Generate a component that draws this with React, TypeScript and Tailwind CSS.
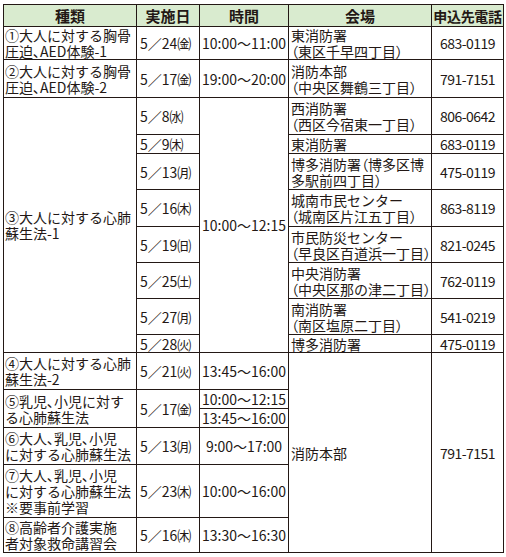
import React from "react";

const td = "border border-[#231815] align-middle p-0";
const c1 = td + " pl-[1px] text-left whitespace-nowrap";
const c2 = td + " pl-[3px] text-left whitespace-nowrap";
const c3 = td + " text-center whitespace-nowrap";
const c4 = td + " pl-[2px] text-left whitespace-nowrap";
const c5 = td + " text-center whitespace-nowrap";

const Num = ({ children }: { children: React.ReactNode }) => (
  <span className="tracking-[-0.04em]">{children}</span>
);
const P = ({ children }: { children: React.ReactNode }) => (
  <span className="[font-feature-settings:'palt']">{children}</span>
);
const L = () => <P>（</P>;
const R = () => <P>）</P>;
const C = () => <P>、</P>;

export default function App() {
  return (
    <div className="w-[506px] h-[557px] bg-white pt-[4px] pl-[3px] font-['Noto_Sans_CJK_JP','Noto_Sans',sans-serif] text-[14px] leading-[16px] text-[#231815]">
      <table className="border-collapse table-fixed w-[500px]">
        <colgroup>
          <col className="w-[133px]" />
          <col className="w-[63px]" />
          <col className="w-[89px]" />
          <col className="w-[143px]" />
          <col className="w-[72px]" />
        </colgroup>
        <tbody>
          <tr className="h-[22px] bg-[#d9ebcf] font-bold text-[15px] leading-[20px]">
            <td className={td + " text-center"}>種類</td>
            <td className={td + " text-center"}>実施日</td>
            <td className={td + " text-center"}>時間</td>
            <td className={td + " text-center"}>会場</td>
            <td className={td + " text-center whitespace-nowrap text-[14px] tracking-[-0.02em]"}>申込先電話</td>
          </tr>
          <tr className="h-[33px]">
            <td className={c1}>①大人に対する胸骨<br />圧迫<C />AED体験-1</td>
            <td className={c2}>5／24㈮</td>
            <td className={c3}>10:00～11:00</td>
            <td className={c4}>東消防署<br /><L />東区千早四丁目<R /></td>
            <td className={c5}><Num>683-0119</Num></td>
          </tr>
          <tr className="h-[38px]">
            <td className={c1}>②大人に対する胸骨<br />圧迫<C />AED体験-2</td>
            <td className={c2}>5／17㈮</td>
            <td className={c3}>19:00～20:00</td>
            <td className={c4}>消防本部<br /><L />中央区舞鶴三丁目<R /></td>
            <td className={c5}><Num>791-7151</Num></td>
          </tr>
          <tr className="h-[37px]">
            <td className={c1} rowSpan={8}>③大人に対する心肺<br />蘇生法-1</td>
            <td className={c2}>5／8㈬</td>
            <td className={c3} rowSpan={8}>10:00～12:15</td>
            <td className={c4}>西消防署<br /><L />西区今宿東一丁目<R /></td>
            <td className={c5}><Num>806-0642</Num></td>
          </tr>
          <tr className="h-[19px]">
            <td className={c2}>5／9㈭</td>
            <td className={c4}>東消防署</td>
            <td className={c5}><Num>683-0119</Num></td>
          </tr>
          <tr className="h-[36px]">
            <td className={c2}>5／13㈪</td>
            <td className={c4}>博多消防署<L />博多区博<br />多駅前四丁目<R /></td>
            <td className={c5}><Num>475-0119</Num></td>
          </tr>
          <tr className="h-[37px]">
            <td className={c2}>5／16㈭</td>
            <td className={c4}>城南市民センター<br /><L />城南区片江五丁目<R /></td>
            <td className={c5}><Num>863-8119</Num></td>
          </tr>
          <tr className="h-[36px]">
            <td className={c2}>5／19㈰</td>
            <td className={c4}>市民防災センター<br /><L />早良区百道浜一丁目<R /></td>
            <td className={c5}><Num>821-0245</Num></td>
          </tr>
          <tr className="h-[36px]">
            <td className={c2}>5／25㈯</td>
            <td className={c4}>中央消防署<br /><L />中央区那の津二丁目<R /></td>
            <td className={c5}><Num>762-0119</Num></td>
          </tr>
          <tr className="h-[36px]">
            <td className={c2}>5／27㈪</td>
            <td className={c4}>南消防署<br /><L />南区塩原二丁目<R /></td>
            <td className={c5}><Num>541-0219</Num></td>
          </tr>
          <tr className="h-[18px]">
            <td className={c2}>5／28㈫</td>
            <td className={c4}>博多消防署</td>
            <td className={c5}><Num>475-0119</Num></td>
          </tr>
          <tr className="h-[37px]">
            <td className={c1}>④大人に対する心肺<br />蘇生法-2</td>
            <td className={c2}>5／21㈫</td>
            <td className={c3}>13:45～16:00</td>
            <td className={c4} rowSpan={6}>消防本部</td>
            <td className={c5} rowSpan={6}><Num>791-7151</Num></td>
          </tr>
          <tr className="h-[19px]">
            <td className={c1} rowSpan={2}>⑤乳児<C />小児に対す<br />る心肺蘇生法</td>
            <td className={c2} rowSpan={2}>5／17㈮</td>
            <td className={c3}>10:00～12:15</td>
          </tr>
          <tr className="h-[19px]">
            <td className={c3}>13:45～16:00</td>
          </tr>
          <tr className="h-[37px]">
            <td className={c1}>⑥大人<C />乳児<C />小児<br />に対する心肺蘇生法</td>
            <td className={c2}>5／13㈪</td>
            <td className={c3}>9:00～17:00</td>
          </tr>
          <tr className="h-[53px]">
            <td className={c1}>⑦大人<C />乳児<C />小児<br />に対する心肺蘇生法<br />※要事前学習</td>
            <td className={c2}>5／23㈭</td>
            <td className={c3}>10:00～16:00</td>
          </tr>
          <tr className="h-[35px]">
            <td className={c1}>⑧高齢者介護実施<br />者対象救命講習会</td>
            <td className={c2}>5／16㈭</td>
            <td className={c3}>13:30～16:30</td>
          </tr>
        </tbody>
      </table>
    </div>
  );
}
